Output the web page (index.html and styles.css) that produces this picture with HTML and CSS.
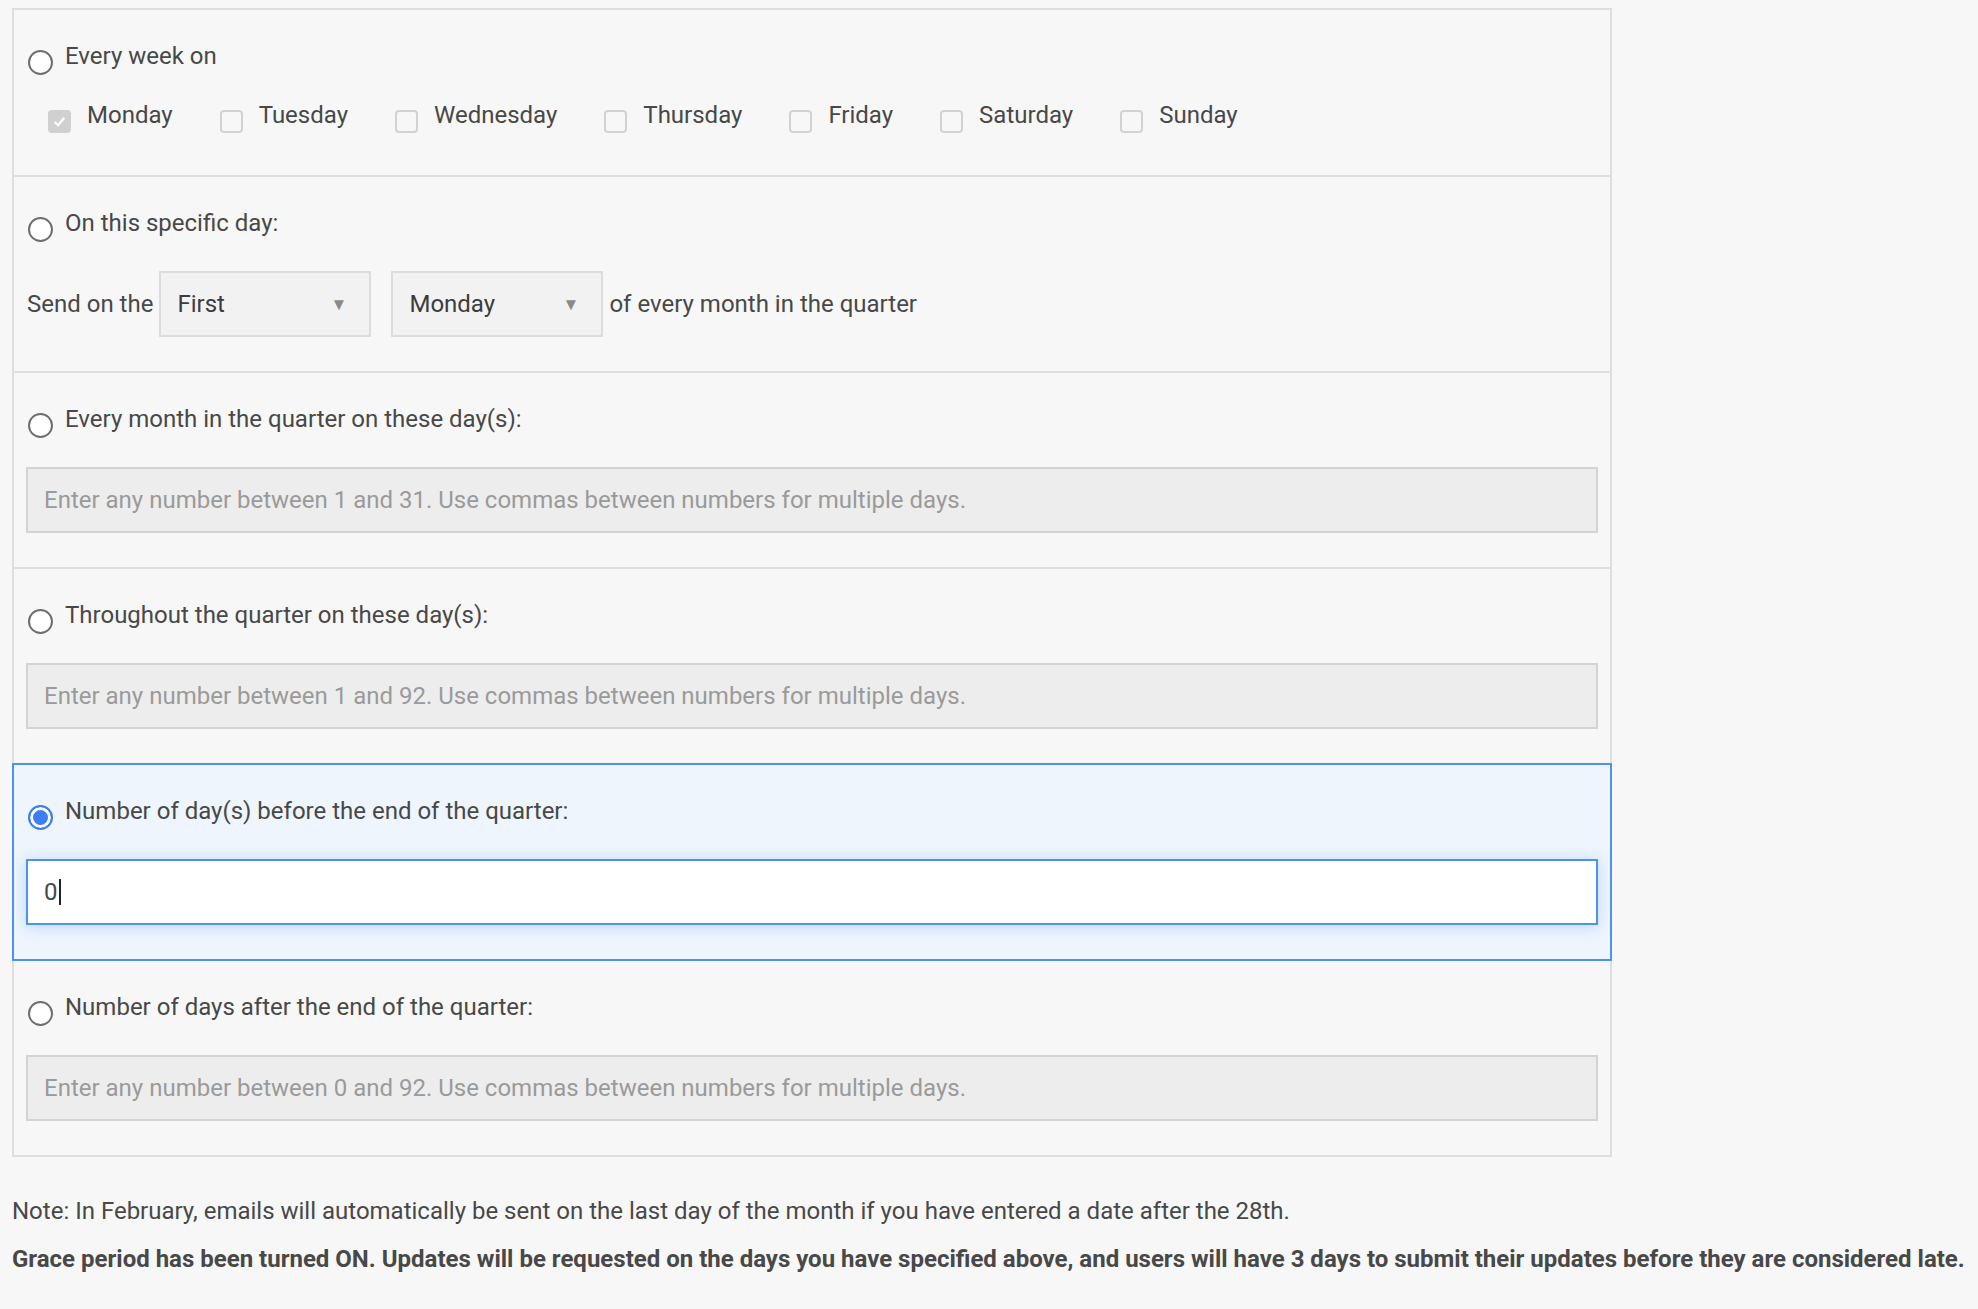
FILE: index.html
```html
<!DOCTYPE html>
<html lang="en">
<head>
    <meta charset="UTF-8">
    <meta name="viewport" content="width=device-width, initial-scale=1.0">
    <title>Quarterly schedule</title>
    <link rel="stylesheet" href="styles.css">
</head>
<body>
    <div class="schedule">
        <div class="option">
            <label class="option-head">
                <input type="radio" name="when" class="radio">
                <span>Every week on</span>
            </label>
            <div class="days">
                <label class="day"><input type="checkbox" class="check" checked disabled><span>Monday</span></label>
                <label class="day"><input type="checkbox" class="check"><span>Tuesday</span></label>
                <label class="day"><input type="checkbox" class="check"><span>Wednesday</span></label>
                <label class="day"><input type="checkbox" class="check"><span>Thursday</span></label>
                <label class="day"><input type="checkbox" class="check"><span>Friday</span></label>
                <label class="day"><input type="checkbox" class="check"><span>Saturday</span></label>
                <label class="day"><input type="checkbox" class="check"><span>Sunday</span></label>
            </div>
        </div>

        <div class="option">
            <label class="option-head">
                <input type="radio" name="when" class="radio">
                <span>On this specific day:</span>
            </label>
            <div class="send-row">
                <span>Send on the</span>
                <div class="select"><span>First</span><span class="arrow">&#9660;</span></div>
                <div class="select"><span>Monday</span><span class="arrow">&#9660;</span></div>
                <span>of every month in the quarter</span>
            </div>
        </div>

        <div class="option">
            <label class="option-head">
                <input type="radio" name="when" class="radio">
                <span>Every month in the quarter on these day(s):</span>
            </label>
            <input type="text" class="field" placeholder="Enter any number between 1 and 31. Use commas between numbers for multiple days.">
        </div>

        <div class="option">
            <label class="option-head">
                <input type="radio" name="when" class="radio">
                <span>Throughout the quarter on these day(s):</span>
            </label>
            <input type="text" class="field" placeholder="Enter any number between 1 and 92. Use commas between numbers for multiple days.">
        </div>

        <div class="option active">
            <label class="option-head">
                <input type="radio" name="when" class="radio" checked>
                <span>Number of day(s) before the end of the quarter:</span>
            </label>
            <div class="field focused">0<span class="caret"></span></div>
        </div>

        <div class="option">
            <label class="option-head">
                <input type="radio" name="when" class="radio">
                <span>Number of days after the end of the quarter:</span>
            </label>
            <input type="text" class="field" placeholder="Enter any number between 0 and 92. Use commas between numbers for multiple days.">
        </div>
    </div>

    <p class="note">Note: In February, emails will automatically be sent on the last day of the month if you have entered a date after the 28th.</p>
    <p class="note grace">Grace period has been turned ON. Updates will be requested on the days you have specified above, and users will have 3 days to submit their updates before they are considered late.</p>
</body>
</html>
```

FILE: styles.css
```css
html,body{
    margin:0px;
    padding:0px;
}
body{
    background-color:#f7f7f7;
    color:#484848;
    font-family:Roboto, "Liberation Sans", sans-serif;
    font-size:24px;
    line-height:28px;
    padding:8px 12px;
}
.schedule{
    width:1600px;
    box-sizing:border-box;
}
.option{
    border:2px solid #dedede;
    margin-top:-2px;
    padding:32px 12px 34px;
    background-color:#f7f7f7;
}
.option:first-child{
    margin-top:0px;
}
.option.active{
    position:relative;
    background-color:#eef5fd;
    border-color:#4c92f2;
}
.option-head{
    display:flex;
    align-items:flex-start;
    margin-bottom:29px;
}
.radio{
    appearance:none;
    -webkit-appearance:none;
    width:25px;
    height:25px;
    margin:8px 12px 0px 2px;
    border:2px solid #6e6e6e;
    border-radius:50%;
    background-color:#fff;
    flex-shrink:0;
}
.radio:checked{
    border-color:#3b7ff3;
    background-color:#3b7ff3;
    box-shadow:inset 0px 0px 0px 3px #fff;
}
.days{
    display:flex;
    align-items:flex-start;
    margin-top:-3px;
    padding-bottom:8px;
}
.day{
    display:flex;
    align-items:flex-start;
    margin-right:47px;
}
.check{
    appearance:none;
    -webkit-appearance:none;
    width:23px;
    height:23px;
    margin:9px 16px 0px 22px;
    border:2px solid #d2d2d2;
    border-radius:4px;
    background-color:#f7f7f7;
    box-sizing:border-box;
}
.day + .day .check{
    margin-left:0px;
}
.check:checked{
    background-color:#d0d0d0;
    border-color:#d0d0d0;
    background-image:url("data:image/svg+xml;utf8,<svg xmlns='http://www.w3.org/2000/svg' viewBox='0 0 20 20'><path d='M5 10.5l3.5 3.5L15 6' fill='none' stroke='white' stroke-width='2.4'/></svg>");
    background-size:100% 100%;
}
.send-row{
    display:flex;
    align-items:center;
    margin-left:1px;
}
.select{
    display:flex;
    align-items:center;
    justify-content:space-between;
    width:212px;
    height:66px;
    box-sizing:border-box;
    padding:0px 22px 0px 16px;
    margin:0px 6px 0px 6px;
    border:2px solid #dcdcdc;
    background-color:#f2f2f2;
    color:#3c3c3c;
}
.select + .select{
    margin-left:14px;
}
.arrow{
    font-size:17px;
    color:#8a8a8a;
}
.field{
    display:block;
    width:100%;
    height:66px;
    box-sizing:border-box;
    margin:0px;
    padding:0px 16px;
    border:2px solid #d3d3d3;
    background-color:#ededed;
    font-family:inherit;
    font-size:24px;
    color:#484848;
    outline:none;
}
.field::placeholder{
    color:#9a9a9a;
}
.field.focused{
    display:flex;
    align-items:center;
    background-color:#fff;
    border-color:#4c92f2;
    box-shadow:0px 2px 14px rgba(76,146,242,0.3);
}
.caret{
    display:inline-block;
    width:2px;
    height:26px;
    background-color:#222;
    margin-left:1px;
}
.note{
    margin:40px 0px 20px;
}
.note.grace{
    margin-top:0px;
    font-weight:bold;
}
```
